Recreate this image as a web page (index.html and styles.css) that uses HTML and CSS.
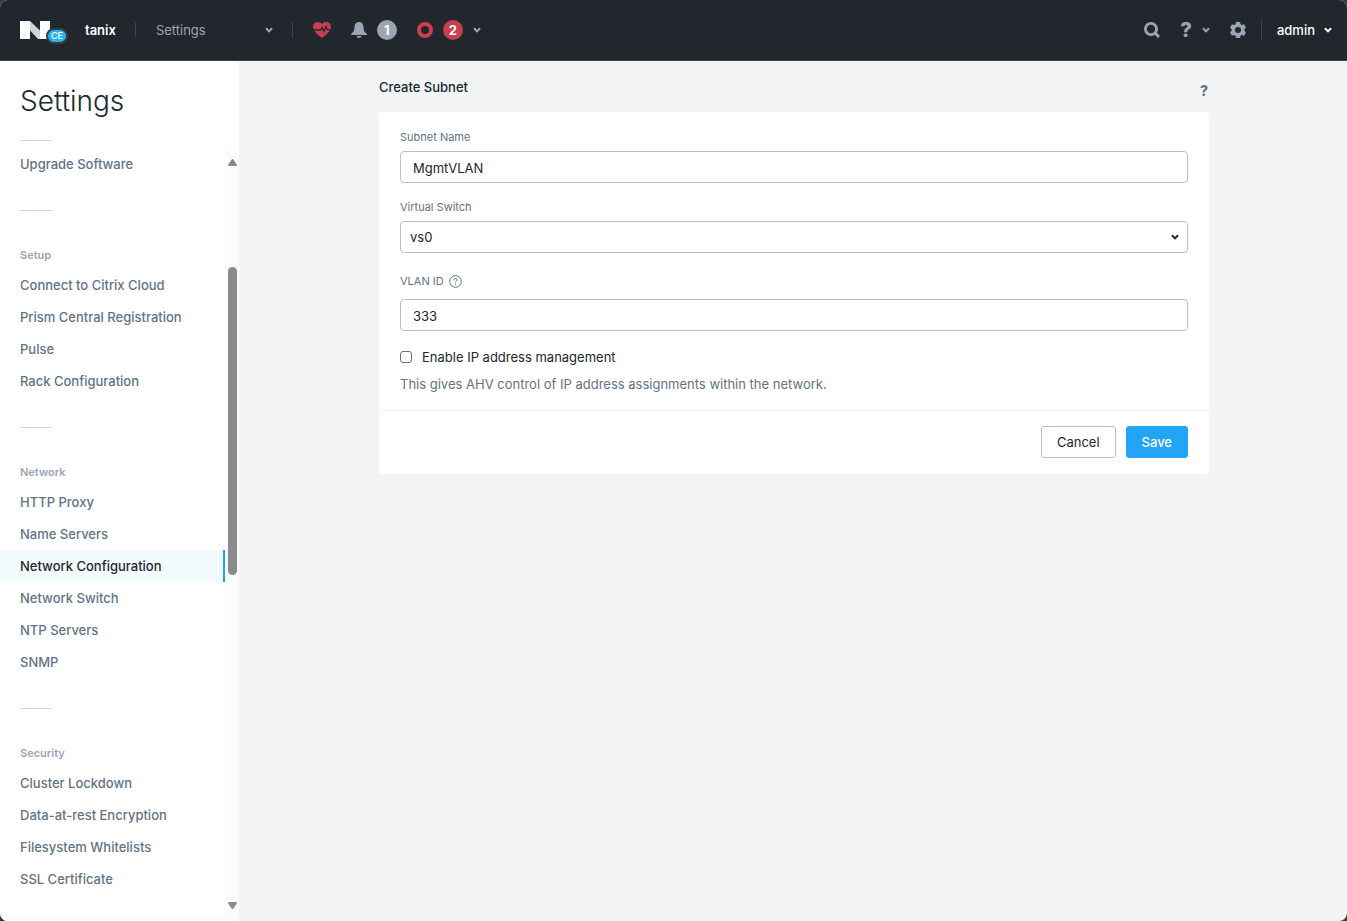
FILE: index.html
```html
<!DOCTYPE html>
<html lang="en">
<head>
    <meta charset="UTF-8">
    <title>Settings - Create Subnet</title>
    <link rel="stylesheet" href="styles.css">
</head>
<body>
<svg class="sprite" aria-hidden="true">
    <symbol id="chevron" viewBox="0 0 8 8">
        <path d="M1 2.2l3 3.200 3-3.200" fill="none" stroke="currentColor" stroke-width="2"/>
    </symbol>
</svg>
<div class="window">
    <header class="topbar">
        <a class="logo" href="#" aria-label="Home">
            <svg width="30" height="18" viewBox="0 0 30 18">
                <path d="M0 0h10v18H0zM20 0h10v18H20z" fill="#fff"/>
                <path d="M10 0l10 9.5V18h-2L10 9.5z" fill="#d3d3d3"/>
            </svg>
            <span class="edition">CE</span>
        </a>
        <a class="cluster" href="#">tanix</a>
        <span class="sep"></span>
        <button class="page-menu" type="button">Settings
            <svg class="chevron"><use href="#chevron"/></svg>
        </button>
        <span class="sep"></span>
        <nav class="status">
            <button class="red" type="button" aria-label="Health">
                <svg width="18" height="16" viewBox="0 0 18 16">
                    <path d="M9 16C6 13.7 0 9.5 0 5 0 2 2.2 0 4.8 0 6.6 0 8.2.9 9 2.3 9.8.9 11.4 0 13.2 0 15.8 0 18 2 18 5c0 4.500-6 8.700-9 11z" fill="currentColor"/>
                    <path d="M0 8h7.500l1.700-2.200 1.700 3.400 2.200-4.600 1.200 3H18" fill="none" stroke="#22272e" stroke-width="1.3"/>
                </svg>
            </button>
            <button class="gray" type="button" aria-label="Alerts">
                <svg width="16" height="16" viewBox="0 0 16 16">
                    <path d="M8 0c3 0 4.300 2 4.500 5 .2 3.500.6 5 3.500 7v1H0v-1c2.900-2 3.300-3.500 3.500-7C3.700 2 5 0 8 0zM5.500 14h5c-.4 1.300-1.300 2-2.500 2s-2.100-.7-2.500-2z" fill="currentColor"/>
                </svg>
                <span class="count">1</span>
            </button>
            <button class="red" type="button" aria-label="Tasks">
                <svg width="16" height="16" viewBox="0 0 16 16">
                    <circle cx="8" cy="8" r="6" fill="none" stroke="currentColor" stroke-width="4"/>
                </svg>
                <span class="count">2</span>
                <svg class="chevron"><use href="#chevron"/></svg>
            </button>
        </nav>
        <nav class="tools">
            <button type="button" aria-label="Search">
                <svg width="16" height="16" viewBox="0 0 16 16">
                    <circle cx="7" cy="7" r="5.6" fill="none" stroke="currentColor" stroke-width="2.8"/>
                    <path d="M11 11l4 4" stroke="currentColor" stroke-width="3"/>
                </svg>
            </button>
            <button type="button" aria-label="Help">
                <span class="question">?</span>
                <svg class="chevron"><use href="#chevron"/></svg>
            </button>
            <button type="button" aria-label="Configuration">
                <svg width="16" height="16" viewBox="0 0 16 16">
                    <path d="M6 0h4l.5 2.300 1.300.8 2.300-.8 1.900 3.400L14.300 7.200v1.600L16 10.300l-1.900 3.400-2.300-.8-1.300.8L10 16H6l-.5-2.300-1.300-.8-2.300.8L0 10.300l1.700-1.500V7.200L0 5.700l1.900-3.400 2.300.8 1.300-.8zM8 5a3 3 0 1 0 0 6 3 3 0 0 0 0-6z" fill="currentColor" fill-rule="evenodd"/>
                </svg>
            </button>
        </nav>
        <span class="sep tall"></span>
        <button class="user" type="button">admin
            <svg class="chevron"><use href="#chevron"/></svg>
        </button>
    </header>

    <div class="content">
        <aside class="sidebar">
            <h1>Settings</h1>
            <div class="scroller">
                <nav class="menu">
                    <ul>
                        <li><a href="#">Upgrade Software</a></li>
                    </ul>
                    <h2>Setup</h2>
                    <ul>
                        <li><a href="#">Connect to Citrix Cloud</a></li>
                        <li><a href="#">Prism Central Registration</a></li>
                        <li><a href="#">Pulse</a></li>
                        <li><a href="#">Rack Configuration</a></li>
                    </ul>
                    <h2>Network</h2>
                    <ul>
                        <li><a href="#">HTTP Proxy</a></li>
                        <li><a href="#">Name Servers</a></li>
                        <li><a class="current" href="#">Network Configuration</a></li>
                        <li><a href="#">Network Switch</a></li>
                        <li><a href="#">NTP Servers</a></li>
                        <li><a href="#">SNMP</a></li>
                    </ul>
                    <h2>Security</h2>
                    <ul>
                        <li><a href="#">Cluster Lockdown</a></li>
                        <li><a href="#">Data-at-rest Encryption</a></li>
                        <li><a href="#">Filesystem Whitelists</a></li>
                        <li><a href="#">SSL Certificate</a></li>
                    </ul>
                </nav>
                <div class="scrollbar" aria-hidden="true">
                    <svg width="9" height="7" viewBox="0 0 9 7"><path d="M4.500 1 8 6H1z" fill="#8b8b8b" stroke="#8b8b8b" stroke-width="2" stroke-linejoin="round"/></svg>
                    <div class="track">
                        <div class="thumb"></div>
                    </div>
                    <svg width="9" height="7" viewBox="0 0 9 7"><path d="M1 1h7L4.500 6z" fill="#8b8b8b" stroke="#8b8b8b" stroke-width="2" stroke-linejoin="round"/></svg>
                </div>
            </div>
        </aside>

        <main class="main">
            <div class="page">
                <div class="page-head">
                    <h2>Create Subnet</h2>
                    <button class="page-help" type="button" aria-label="Help">?</button>
                </div>
                <form class="card">
                    <div class="fields">
                        <div class="field">
                            <label for="name">Subnet Name</label>
                            <input class="text" id="name" type="text" value="MgmtVLAN">
                        </div>
                        <div class="field">
                            <label for="switch">Virtual Switch</label>
                            <div class="select">
                                <select id="switch">
                                    <option>vs0</option>
                                </select>
                                <svg class="chevron"><use href="#chevron"/></svg>
                            </div>
                        </div>
                        <div class="field">
                            <label class="with-icon" for="vlan">VLAN ID
                                <svg width="13" height="13" viewBox="0 0 13 13" fill="none" stroke="currentColor">
                                    <circle cx="6.5" cy="6.5" r="5.8"/>
                                    <path d="M4.800 5.200c0-1 .7-1.700 1.700-1.700s1.700.6 1.700 1.500c0 1.200-1.700 1.200-1.700 2.600M6.500 8.700v1.100"/>
                                </svg>
                            </label>
                            <input class="text" id="vlan" type="text" value="333">
                        </div>
                        <div>
                            <label class="check" for="ipam">
                                <input id="ipam" type="checkbox">Enable IP address management
                            </label>
                            <p class="hint">This gives AHV control of IP address assignments within the network.</p>
                        </div>
                    </div>
                    <div class="actions">
                        <button class="btn" type="button">Cancel</button>
                        <button class="btn primary" type="submit">Save</button>
                    </div>
                </form>
            </div>
        </main>
    </div>
</div>
</body>
</html>
```
FILE: styles.css
```css
* {
    box-sizing: border-box;
    margin: 0;
    padding: 0;
}

html {
    background-color: #3b3b3b;
}

body {
    font: 13px/20px Inter, "Liberation Sans", sans-serif;
    color: #22272e;
}

ul {
    list-style: none;
}

a {
    color: inherit;
    text-decoration: none;
}

svg {
    display: block;
    flex: none;
}

button, input, select {
    font: inherit;
    color: inherit;
}

button {
    border: 0;
    background: none;
    cursor: pointer;
}

.sprite {
    display: none;
}

.chevron {
    width: 8px;
    height: 8px;
}

.window {
    display: flex;
    flex-direction: column;
    height: 100vh;
    border-radius: 8px;
    overflow: hidden;
    background-color: #f2f4f6;
}

/* top bar */
.topbar {
    display: flex;
    align-items: center;
    flex: none;
    height: 61px;
    padding: 0 15px 0 20px;
    border-bottom: 1px solid #36404c;
    background-color: #22272e;
    color: #9aa5b5;
}

.topbar button {
    display: flex;
    align-items: center;
    gap: 10px;
}

.logo {
    position: relative;
    width: 46px;
    margin-right: 19px;
}

.edition {
    position: absolute;
    right: -2px;
    bottom: -5px;
    width: 22px;
    height: 16px;
    border: 2px solid #373c42;
    border-radius: 8px;
    background-color: #22b5f0;
    color: #fff;
    font-size: 9px;
    font-weight: 500;
    line-height: 12px;
    text-align: center;
}

.cluster {
    color: #fff;
    font-weight: 600;
}

.sep {
    width: 1px;
    height: 16px;
    margin: 0 20px 0 19px;
    background-color: #3a434e;
}

.sep.tall {
    height: 22px;
    margin: 0 15px;
}

.topbar .page-menu {
    justify-content: space-between;
    width: 117px;
}

.status, .tools {
    display: flex;
    align-items: center;
    gap: 20px;
}

.tools {
    margin-left: auto;
}

.red {
    color: #c83f51;
}

.gray {
    color: #9aa5b5;
}

.count {
    width: 20px;
    height: 20px;
    border-radius: 50%;
    background-color: #c83f51;
    color: #fff;
    font-weight: 700;
    text-align: center;
}

.gray .count {
    background-color: #9aa5b5;
}

.status .chevron {
    color: #9aa5b5;
}

.question {
    font-size: 20px;
    font-weight: 800;
}

.topbar .user {
    gap: 9px;
    color: #fff;
    font-weight: 500;
}

/* sidebar */
.content {
    display: flex;
    flex: 1;
    min-height: 0;
}

.sidebar {
    display: flex;
    flex-direction: column;
    flex: none;
    width: 241px;
    border-right: 2px solid #f2f4f6;
    background-color: #fff;
}

.sidebar h1 {
    padding: 20px 20px 0;
    font-size: 28px;
    font-weight: 300;
    line-height: 40px;
}

.sidebar h1::after, .menu h2::before {
    content: "";
    display: block;
    width: 32px;
    height: 1px;
    background-color: #d1d7e0;
}

.sidebar h1::after {
    margin: 19px 0 7px;
}

.scroller {
    display: flex;
    flex: 1;
    min-height: 0;
}

.menu {
    flex: 1;
    border-bottom: 4px solid #fbfbfb;
    overflow: hidden;
}

.menu h2 {
    padding: 30px 20px 6px;
    color: #9aa5b5;
    font-size: 11px;
    font-weight: 600;
    line-height: 16px;
}

.menu h2::before {
    margin-bottom: 36px;
}

.menu a {
    display: block;
    padding: 6px 20px;
    color: #627386;
    font-weight: 500;
}

.menu .current {
    border-right: 2px solid #22a5f7;
    background-color: #f3fbff;
    color: #22272e;
}

.scrollbar {
    display: flex;
    flex-direction: column;
    align-items: center;
    width: 14px;
    margin-top: 3px;
    padding: 8px 0 12px;
    background-color: #fbfbfb;
}

.track {
    display: flex;
    flex-direction: column;
    flex: 1;
}

.track::before {
    content: "";
    flex: 101;
}

.track::after {
    content: "";
    flex: 327;
}

.thumb {
    flex: 308;
    width: 9px;
    border-radius: 5px;
    background-color: #8b8b8b;
}

/* form page */
.main {
    flex: 1;
    padding: 16px 20px;
}

.page {
    max-width: 830px;
    margin: 0 auto;
}

.page-head {
    display: flex;
    justify-content: space-between;
    align-items: flex-start;
    height: 35px;
}

.page-head h2 {
    font-size: 13px;
    font-weight: 500;
}

.page-help {
    padding: 4px 1px 0;
    color: #627386;
    font-size: 14px;
    font-weight: 800;
}

.card {
    border-radius: 4px;
    background-color: #fff;
}

.fields {
    display: flex;
    flex-direction: column;
    gap: 16px;
    padding: 17px 21px 16px;
}

.field {
    display: flex;
    flex-direction: column;
    gap: 6px;
}

.field label {
    color: #627386;
    font-size: 11px;
    line-height: 16px;
}

.field .with-icon {
    display: flex;
    align-items: center;
    gap: 5px;
    line-height: 24px;
}

.text, select {
    width: 100%;
    height: 32px;
    border: 1px solid #b8bfca;
    border-radius: 4px;
    background-color: #fff;
    outline: 0;
}

.text {
    padding: 2px 12px 0;
}

select {
    display: block;
    padding: 0 9px;
    appearance: none;
}

.select {
    position: relative;
}

.select .chevron {
    position: absolute;
    top: 12px;
    right: 9px;
    pointer-events: none;
}

.check {
    display: flex;
    align-items: center;
    gap: 10px;
}

.check input {
    width: 12px;
    height: 12px;
    border: 1px solid #627386;
    border-radius: 3px;
    appearance: none;
}

.hint {
    margin-top: 7px;
    color: #627386;
}

.actions {
    display: flex;
    justify-content: flex-end;
    gap: 10px;
    padding: 15px 21px 16px;
    border-top: 1px solid #f2f4f6;
}

.btn {
    height: 32px;
    padding: 0 15px;
    border: 1px solid #b8bfca;
    border-radius: 3px;
}

.btn.primary {
    border-color: #22a5f7;
    background-color: #22a5f7;
    color: #fff;
    font-weight: 500;
}
```
